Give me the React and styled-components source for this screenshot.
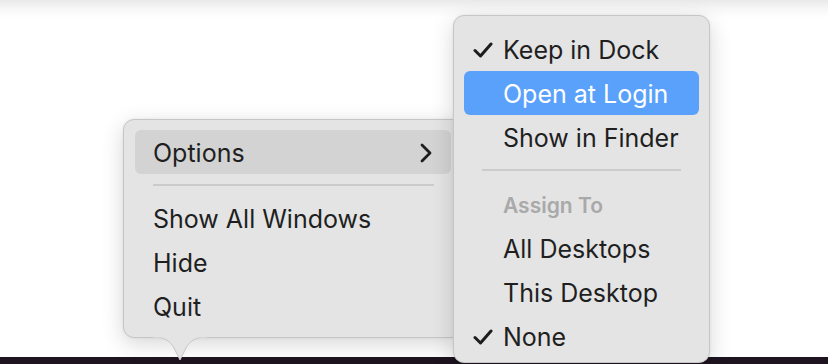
import React from "react";
import styled, { createGlobalStyle } from "styled-components";

const GlobalStyle = createGlobalStyle`
  html, body {
    margin: 0;
    padding: 0;
    background: #fff;
  }
  body {
    font-family: "Inter", "Liberation Sans", sans-serif;
    -webkit-font-smoothing: antialiased;
  }
`;

function Check() {
  return (
    <CheckIcon viewBox="0 0 20 16">
      <path d="M2 8.5 L7.5 14 L18 2" fill="none" stroke="#1d1d1d" strokeWidth="3" strokeLinecap="round" strokeLinejoin="round" />
    </CheckIcon>
  );
}

function Chevron() {
  return (
    <ChevronIcon viewBox="0 0 12 20">
      <path d="M2 2 L10 10 L2 18" fill="none" stroke="#1d1d1d" strokeWidth="2.8" strokeLinecap="round" strokeLinejoin="round" />
    </ChevronIcon>
  );
}

function App() {
  return (
    <>
      <GlobalStyle />
      <Screen>
        <Desktop>
          <Menu left={123} top={119} width={340}>
            <Row active="gray">
              <Label>Options</Label>
              <Chevron />
            </Row>
            <Separator />
            <Row><Label>Show All Windows</Label></Row>
            <Row><Label>Hide</Label></Row>
            <Row><Label>Quit</Label></Row>
            <Tail viewBox="0 0 54 26">
              <path d="M0 1 C12 1 17 5 21 12 L27 24 L33 12 C37 5 42 1 54 1" fill="#e4e4e4" stroke="#c6c6c6" strokeWidth="1" />
              <rect x="0" y="0" width="54" height="1.5" fill="#e4e4e4" />
            </Tail>
          </Menu>

          <Menu left={453} top={15} width={257} height={348} tall>
            <Row sub>
              <Check />
              <Label>Keep in Dock</Label>
            </Row>
            <Row sub active="blue"><Label>Open at Login</Label></Row>
            <Row sub><Label>Show in Finder</Label></Row>
            <Separator wide />
            <Heading>Assign To</Heading>
            <Row sub><Label>All Desktops</Label></Row>
            <Row sub><Label>This Desktop</Label></Row>
            <Row sub>
              <Check />
              <Label>None</Label>
            </Row>
          </Menu>
        </Desktop>
        <Dock />
      </Screen>
    </>
  );
}

export default App;

const Screen = styled.div`
  width: 828px;
  height: 364px;
  overflow: hidden;
  display: flex;
  flex-direction: column;
  background: linear-gradient(to bottom, #e9e9e9 0px, #f6f6f6 8px, #ffffff 18px);
`;

const Desktop = styled.div`
  flex: 1;
  position: relative;
`;

const Dock = styled.div`
  height: 7px;
  background: #1d1420;
`;

const Menu = styled.div`
  position: absolute;
  z-index: ${({ tall }) => (tall ? 2 : 1)};
  left: ${({ left }) => left}px;
  top: ${({ top }) => top}px;
  width: ${({ width }) => width}px;
  height: ${({ height }) => (height ? `${height}px` : "auto")};
  box-sizing: border-box;
  padding: ${({ tall }) => (tall ? "11px 10px" : "10px 11px 9px")};
  background: #e4e4e4;
  border: 1px solid #c6c6c6;
  border-radius: 11px;
  box-shadow: 0 6px 22px rgba(0, 0, 0, 0.16), 0 0 3px rgba(0, 0, 0, 0.06);
  display: flex;
  flex-direction: column;
`;

const Row = styled.div`
  height: 44px;
  flex: none;
  display: flex;
  align-items: center;
  position: relative;
  box-sizing: border-box;
  padding: ${({ sub }) => (sub ? "2px 0 0 39px" : "2px 19px 0 18px")};
  border-radius: 6px;
  font-size: 25px;
  color: ${({ active }) => (active === "blue" ? "#ffffff" : "#1f1f1f")};
  background: ${({ active }) =>
    active === "blue" ? "#5aa1fb" : active === "gray" ? "#d3d3d3" : "transparent"};
`;

const Label = styled.span`
  flex: 1;
  letter-spacing: 0;
`;

const Heading = styled.div`
  height: 44px;
  flex: none;
  display: flex;
  align-items: center;
  padding: 2px 0 0 39px;
  box-sizing: border-box;
  font-size: 21px;
  font-weight: 600;
  color: #a9a9a9;
`;

const Separator = styled.div`
  height: 2px;
  flex: none;
  background: #cbcbcb;
  margin: ${({ wide }) => (wide ? "10px 18px 11px" : "10px 17px 10px 18px")};
`;

const CheckIcon = styled.svg`
  position: absolute;
  left: 9px;
  top: 15px;
  width: 20px;
  height: 16px;
`;

const ChevronIcon = styled.svg`
  width: 12px;
  height: 20px;
`;

const Tail = styled.svg`
  position: absolute;
  left: 29px;
  bottom: -25px;
  width: 54px;
  height: 26px;
`;
